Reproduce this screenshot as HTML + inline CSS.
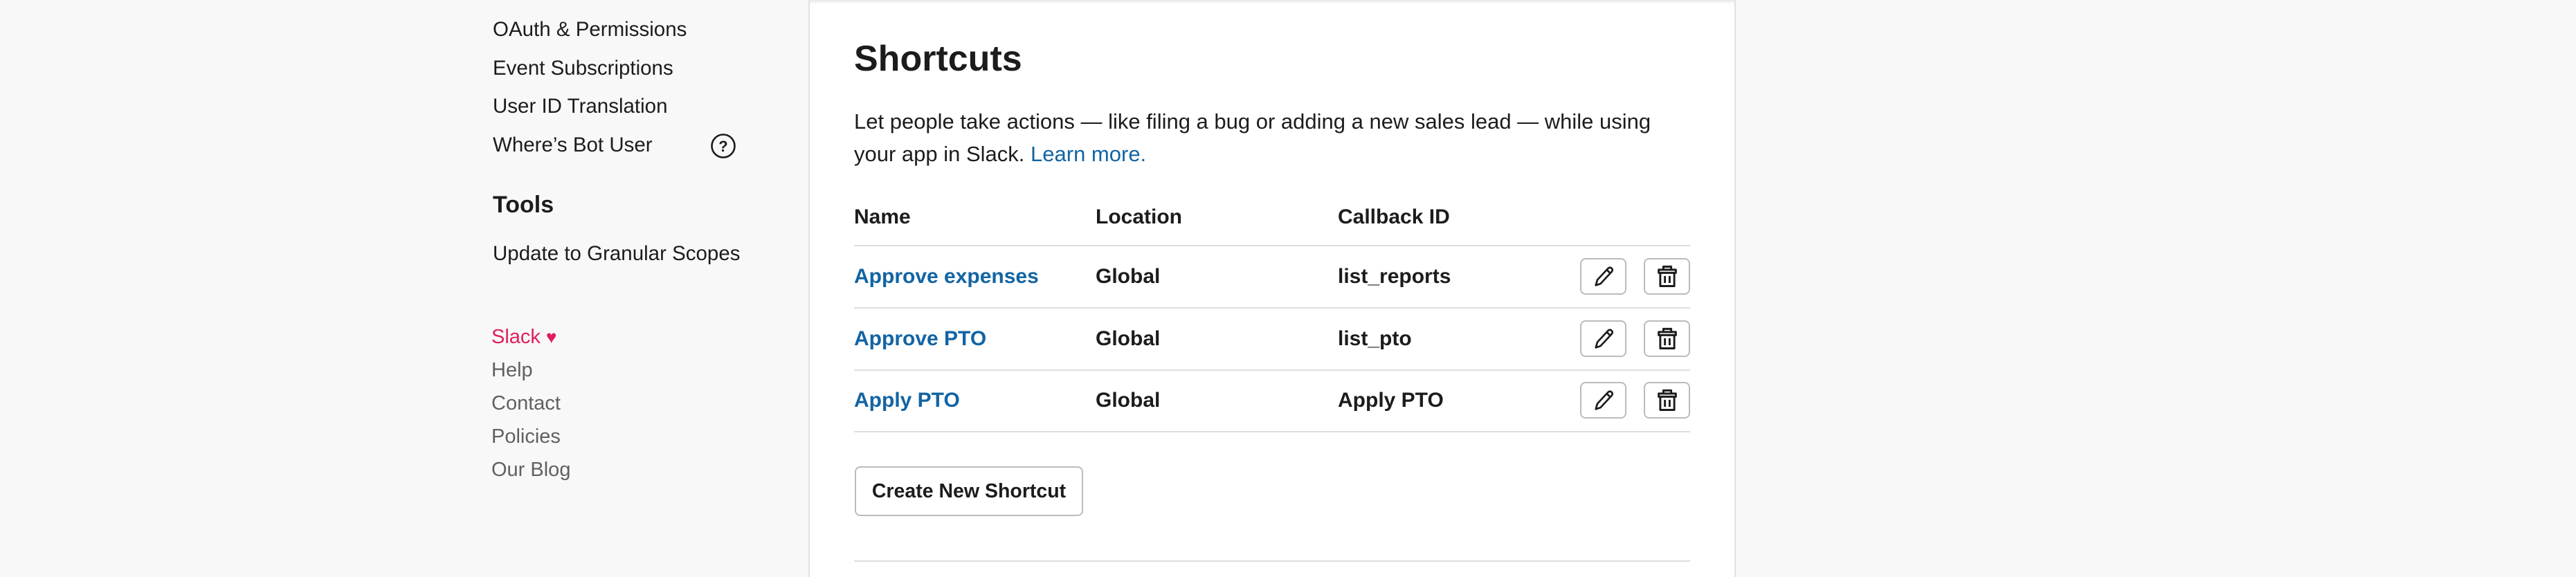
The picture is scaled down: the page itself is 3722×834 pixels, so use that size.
<!DOCTYPE html>
<html><head><meta charset="utf-8"><style>
*{margin:0;padding:0;box-sizing:border-box}
body{width:3722px;height:834px;background:#f8f8f8;font-family:"Liberation Sans",sans-serif;color:#1d1c1d;position:relative;overflow:hidden}
.a{position:absolute;white-space:nowrap}
.panel{position:absolute;left:1168px;top:0;width:1340px;height:834px;background:#fff;border-left:2px solid #e2e2e2;border-right:2px solid #e2e2e2;box-shadow:inset 0 6px 6px -4px rgba(0,0,0,.12)}
.s{font-size:29.5px;line-height:1}
.f{font-size:29px;color:#616061}
.hr{position:absolute;left:1234px;width:1208px;height:2px;background:#dddddd}
.b{font-size:30px;font-weight:bold}
.lnk{color:#1264a3}
.btn{position:absolute;width:67px;height:53px;border:2px solid #bbb;border-radius:8px;background:#fff;display:flex;align-items:center;justify-content:center}
</style></head><body>
<div class="panel"></div>
<div class="a s" style="left:712px;top:28px">OAuth &amp; Permissions</div>
<div class="a s" style="left:712px;top:84px">Event Subscriptions</div>
<div class="a s" style="left:712px;top:139px">User ID Translation</div>
<div class="a s" style="left:712px;top:195px">Where’s Bot User</div>
<svg class="a" style="left:1026px;top:192px" width="38" height="38" viewBox="0 0 38 38"><circle cx="19" cy="19" r="16.5" fill="none" stroke="#1d1c1d" stroke-width="2.6"/><text x="19" y="27" font-family="Liberation Sans" font-size="22" font-weight="bold" text-anchor="middle" fill="#1d1c1d">?</text></svg>
<div class="a" style="left:712px;top:277px;font-size:34px;font-weight:bold">Tools</div>
<div class="a s" style="left:712px;top:352px">Update to Granular Scopes</div>
<div class="a f" style="left:710px;top:471px;color:#e01e5a">Slack <span style="font-size:26px">♥</span></div>
<div class="a f" style="left:710px;top:519px">Help</div>
<div class="a f" style="left:710px;top:567px">Contact</div>
<div class="a f" style="left:710px;top:615px">Policies</div>
<div class="a f" style="left:710px;top:663px">Our Blog</div>

<div class="a" style="left:1234px;top:55px;font-size:52px;font-weight:bold">Shortcuts</div>
<div class="a" style="left:1234px;top:152px;font-size:31px;line-height:47px">Let people take actions — like filing a bug or adding a new sales lead — while using<br>your app in Slack. <span class="lnk">Learn more.</span></div>

<div class="a b" style="left:1234px;top:297px">Name</div>
<div class="a b" style="left:1583px;top:297px">Location</div>
<div class="a b" style="left:1933px;top:297px">Callback ID</div>
<div class="hr" style="top:354px"></div>
<div class="a b lnk" style="left:1234px;top:383px">Approve expenses</div>
<div class="a b" style="left:1583px;top:383px">Global</div>
<div class="a b" style="left:1933px;top:383px">list_reports</div>
<div class="hr" style="top:444px"></div>
<div class="a b lnk" style="left:1234px;top:473px">Approve PTO</div>
<div class="a b" style="left:1583px;top:473px">Global</div>
<div class="a b" style="left:1933px;top:473px">list_pto</div>
<div class="hr" style="top:534px"></div>
<div class="a b lnk" style="left:1234px;top:562px">Apply PTO</div>
<div class="a b" style="left:1583px;top:562px">Global</div>
<div class="a b" style="left:1933px;top:562px">Apply PTO</div>
<div class="hr" style="top:623px"></div>

<div class="btn" style="left:2283px;top:373px"><svg width="36" height="36" viewBox="0 0 32 32" fill="none" stroke="#1d1c1d" stroke-width="2.4" stroke-linejoin="round"><path d="M6 27 L8 20 L22 5 Q25 3 27 6 Q28 8 26 10 L12 25 Z M20 7 L25 12"/></svg></div>
<div class="btn" style="left:2375px;top:373px"><svg width="36" height="36" viewBox="0 0 32 32" fill="none" stroke="#1d1c1d" stroke-width="2.6" stroke-linejoin="round"><path d="M11 7 V3 H21 V7 M5 7 H27 V11 H5 Z M7 11 V28 H25 V11 M13 15 V24 M19 15 V24"/></svg></div>
<div class="btn" style="left:2283px;top:463px"><svg width="36" height="36" viewBox="0 0 32 32" fill="none" stroke="#1d1c1d" stroke-width="2.4" stroke-linejoin="round"><path d="M6 27 L8 20 L22 5 Q25 3 27 6 Q28 8 26 10 L12 25 Z M20 7 L25 12"/></svg></div>
<div class="btn" style="left:2375px;top:463px"><svg width="36" height="36" viewBox="0 0 32 32" fill="none" stroke="#1d1c1d" stroke-width="2.6" stroke-linejoin="round"><path d="M11 7 V3 H21 V7 M5 7 H27 V11 H5 Z M7 11 V28 H25 V11 M13 15 V24 M19 15 V24"/></svg></div>
<div class="btn" style="left:2283px;top:552px"><svg width="36" height="36" viewBox="0 0 32 32" fill="none" stroke="#1d1c1d" stroke-width="2.4" stroke-linejoin="round"><path d="M6 27 L8 20 L22 5 Q25 3 27 6 Q28 8 26 10 L12 25 Z M20 7 L25 12"/></svg></div>
<div class="btn" style="left:2375px;top:552px"><svg width="36" height="36" viewBox="0 0 32 32" fill="none" stroke="#1d1c1d" stroke-width="2.6" stroke-linejoin="round"><path d="M11 7 V3 H21 V7 M5 7 H27 V11 H5 Z M7 11 V28 H25 V11 M13 15 V24 M19 15 V24"/></svg></div>

<div class="a" style="left:1235px;top:674px;width:330px;height:72px;border:2px solid #bbb;border-radius:8px;display:flex;align-items:center;justify-content:center;font-size:28.5px;font-weight:bold">Create New Shortcut</div>
<div class="hr" style="top:810px"></div>
</body></html>
